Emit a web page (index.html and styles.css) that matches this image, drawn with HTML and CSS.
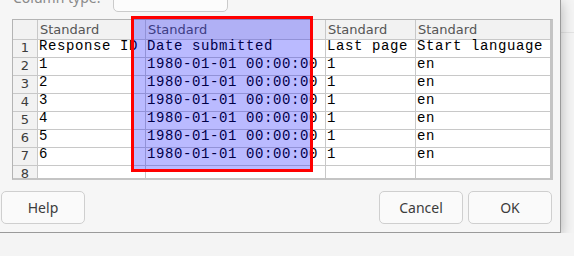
FILE: index.html
```html
<!DOCTYPE html>
<html lang="en">
<head>
    <meta charset="UTF-8">
    <title>Text Import</title>
    <link rel="stylesheet" href="styles.css">
</head>
<body>

    <div class="dialog">
        <div class="type-row">
            <span class="type-label">Column type:</span>
            <span class="type-combo"></span>
        </div>

        <div class="grid-wrap">
            <div class="grid">
                <div class="corner"></div>
                <div class="head">Standard</div>
                <div class="head">Standard</div>
                <div class="head">Standard</div>
                <div class="head">Standard</div>

                <div class="num">1</div>
                <div class="cell">Response ID</div>
                <div class="cell">Date submitted</div>
                <div class="cell">Last page</div>
                <div class="cell">Start language</div>

                <div class="num">2</div>
                <div class="cell">1</div>
                <div class="cell">1980-01-01 00:00:00</div>
                <div class="cell">1</div>
                <div class="cell">en</div>

                <div class="num">3</div>
                <div class="cell">2</div>
                <div class="cell">1980-01-01 00:00:00</div>
                <div class="cell">1</div>
                <div class="cell">en</div>

                <div class="num">4</div>
                <div class="cell">3</div>
                <div class="cell">1980-01-01 00:00:00</div>
                <div class="cell">1</div>
                <div class="cell">en</div>

                <div class="num">5</div>
                <div class="cell">4</div>
                <div class="cell">1980-01-01 00:00:00</div>
                <div class="cell">1</div>
                <div class="cell">en</div>

                <div class="num">6</div>
                <div class="cell">5</div>
                <div class="cell">1980-01-01 00:00:00</div>
                <div class="cell">1</div>
                <div class="cell">en</div>

                <div class="num">7</div>
                <div class="cell">6</div>
                <div class="cell">1980-01-01 00:00:00</div>
                <div class="cell">1</div>
                <div class="cell">en</div>

                <div class="num">8</div>
                <div class="cell"></div>
                <div class="cell"></div>
                <div class="cell"></div>
                <div class="cell"></div>
            </div>
        </div>

        <!-- selected column marker -->
        <div class="selection"></div>

        <div class="buttons">
            <button class="btn">Help</button>
            <span class="spacer"></span>
            <button class="btn">Cancel</button>
            <button class="btn">OK</button>
        </div>
    </div>

</body>
</html>
```

FILE: styles.css
```css
body {
    margin: 0;
    background-color: #f4f4f4;
    background-image: linear-gradient(to bottom, transparent 32px, #e3e3e3 32px, #e3e3e3 33px, transparent 33px);
    font-family: 'Noto Sans', sans-serif;
}

.dialog {
    position: relative;
    width: 561px;
    height: 233px;
    box-sizing: border-box;
    background-color: #f6f6f6;
    border-right: 1px solid #9a9a9a;
    border-bottom: 1px solid #9a9a9a;
    box-shadow: 0 3px 12px rgba(0, 0, 0, 0.28);
    overflow: hidden;
}

.type-row {
    display: flex;
    height: 26px;
    margin-top: -14px;
    padding-left: 13px;
}

.type-label {
    width: 100px;
    padding-top: 2px;
    font-size: 14px;
    line-height: 20px;
    color: #8a8a8a;
}

.type-combo {
    width: 115px;
    height: 26px;
    box-sizing: border-box;
    background-color: #fcfcfc;
    border: 1px solid #cbcbcb;
    border-radius: 5px;
}

.grid-wrap {
    margin: 7px 0 0 12px;
    width: 537px;
    height: 158px;
    overflow: hidden;
    border-top: 1px solid #b4b4b4;
    border-left: 1px solid #b4b4b4;
    border-right: 3px solid #c4c4c4;
    border-bottom: 2px solid #c4c4c4;
}

.grid {
    display: grid;
    grid-template-columns: 24px 107px 179px 89px 134px;
    grid-template-rows: 19px repeat(8, 17px);
    gap: 1px;
    background-color: #c8c8c8;
}

.corner, .head, .num {
    background-color: #f2f2f2;
}

.head {
    font-family: 'DejaVu Sans', sans-serif;
    font-size: 13px;
    line-height: 19px;
    color: #555;
    padding-left: 2px;
    white-space: nowrap;
    overflow: hidden;
}

.num {
    font-family: 'DejaVu Sans', sans-serif;
    font-size: 13px;
    line-height: 15px;
    color: #3c3c3c;
    text-align: center;
}

.cell {
    background-color: #fff;
    font-family: 'Liberation Mono', monospace;
    font-size: 14px;
    letter-spacing: 0.6px;
    line-height: 13px;
    color: #000;
    padding-left: 1px;
    white-space: nowrap;
    overflow: visible;
}

.selection {
    position: absolute;
    left: 131px;
    top: 16px;
    width: 182px;
    height: 156px;
    box-sizing: border-box;
    border: 3px solid #ff0000;
    background-color: rgba(0, 0, 255, 0.27);
}

.buttons {
    display: flex;
    gap: 5px;
    margin-top: 11px;
    padding: 0 8px 0 1px;
}

.spacer {
    flex: 1;
}

.btn {
    width: 84px;
    height: 33px;
    font-family: 'Noto Sans', sans-serif;
    font-size: 14px;
    color: #3c3c3c;
    background-color: #fafafa;
    border: 1px solid #cfcfcf;
    border-radius: 5px;
    padding: 0;
}
```
